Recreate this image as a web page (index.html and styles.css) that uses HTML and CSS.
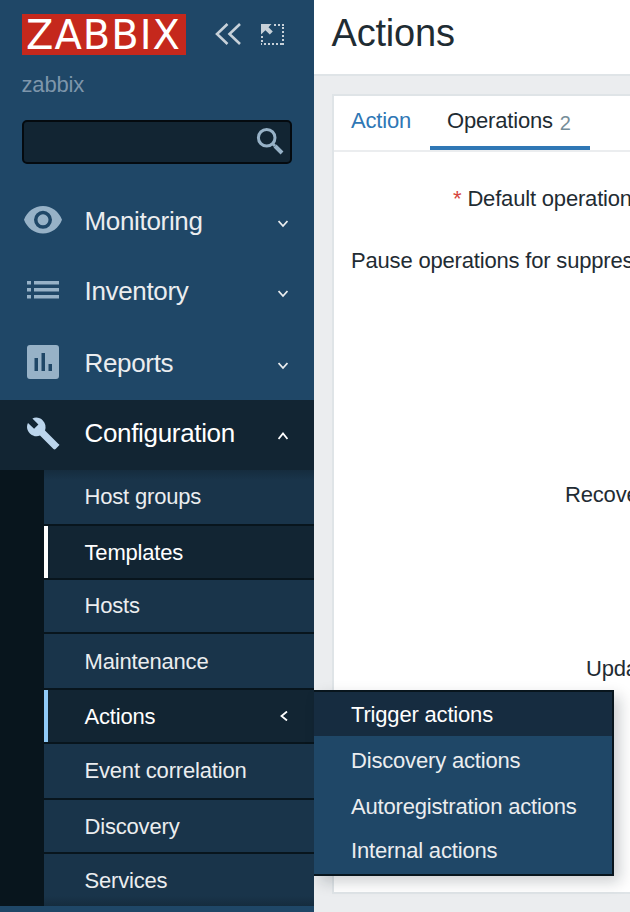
FILE: index.html
```html
<!DOCTYPE html>
<html lang="en">
<head>
<meta charset="utf-8">
<title>Actions</title>
<link rel="stylesheet" href="styles.css">
</head>
<body>
<div class="layout">
  <aside class="sidebar">
    <div class="brand">
      <div class="logo">ZABBIX</div>
      <svg class="collapse" width="28" height="24" viewBox="0 0 28 24"><path d="M13.500 2 3 12l10.500 10M26 2 15.500 12 26 22"/></svg>
      <svg class="kiosk" width="24" height="24" viewBox="0 0 24 24"><path class="arrow" d="M0 1h10.500L7.500 4.200l4.300 4.300-3 3L4.400 7.200 0 11.500z"/><path class="dots" d="M13 2h10M22 4v18M21 21H0M1 19v-6"/></svg>
    </div>
    <div class="server">zabbix</div>
    <div class="search"><svg width="28" height="28" viewBox="0 0 28 28"><circle cx="10.700" cy="10.700" r="8.300"/><path d="m17 17 2 2"/><path class="handle" d="m19 19 7 7"/></svg></div>
    <nav>
      <div class="item"><svg class="icon" width="40" height="40" viewBox="0 0 40 40"><path d="M20 6C11.500 6 4 11.500 1 19.800 4 28 11.500 33.500 20 33.500s16-5.500 19-13.700C36 11.500 28.500 6 20 6zm0 22.800a9 9 0 1 1 0-18 9 9 0 0 1 0 18zm0-14.500a5.500 5.500 0 1 0 0 11 5.500 5.500 0 0 0 0-11z"/></svg><span class="label">Monitoring</span><svg class="chev" width="10" height="8" viewBox="0 0 10 8"><path d="m.500 1 4.500 5 4.500-5"/></svg></div>
      <div class="item second"><svg class="icon" width="40" height="40" viewBox="0 0 40 40"><path d="M4 11h4v3.500H4zM11 11h25v3.500H11zM4 18h4v3.500H4zM11 18h25v3.500H11zM4 25h4v3.500H4zM11 25h25v3.500H11z"/></svg><span class="label">Inventory</span><svg class="chev" width="10" height="8" viewBox="0 0 10 8"><path d="m.500 1 4.500 5 4.500-5"/></svg></div>
      <div class="item third"><svg class="icon" width="40" height="40" viewBox="0 0 40 40"><path fill-rule="evenodd" d="M7 3h26q3 0 3 3v28q0 3-3 3H7q-3 0-3-3V6q0-3 3-3zM11.500 16v13h3.500V16zM18.500 11v18h3.500V11zM25.500 22v7h3.500v-7z"/></svg><span class="label">Reports</span><svg class="chev" width="10" height="8" viewBox="0 0 10 8"><path d="m.500 1 4.500 5 4.500-5"/></svg></div>
      <div class="item open"><svg class="icon" width="40" height="40" viewBox="0 0 40 40"><path d="M35.500 31 22 17.500c1.300-3.500.5-7.400-2.200-10.100C16.900 4.500 12.800 3.800 9.400 5.500l6 6-4.300 4.300L5 9.900C3.200 13.200 4 17.500 6.900 20.400c2.700 2.700 6.600 3.500 10.100 2.200L30.500 36c.6.600 1.500.6 2.100 0l3.400-3.400c.5-.5.500-1.200-.5-1.600z"/></svg><span class="label">Configuration</span><svg class="chev" width="10" height="8" viewBox="0 0 10 8"><path d="m.500 7 4.500-5.500 4.500 5.500"/></svg></div>
      <div class="submenu">
        <div class="sub tall">Host groups</div>
        <div class="sub low hover">Templates</div>
        <div class="sub">Hosts</div>
        <div class="sub tall low">Maintenance</div>
        <div class="sub low current">Actions<svg class="chev" width="8" height="10" viewBox="0 0 8 10"><path d="M7 .500 1.500 5 7 9.500"/></svg>
          <div class="popup">
            <div class="choice selected">Trigger actions</div>
            <div class="choice lower">Discovery actions</div>
            <div class="choice lower">Autoregistration actions</div>
            <div class="choice">Internal actions</div>
          </div>
        </div>
        <div class="sub tall">Event correlation</div>
        <div class="sub low">Discovery</div>
        <div class="sub last low">Services</div>
      </div>
    </nav>
  </aside>
  <main>
    <header><h1>Actions</h1></header>
    <section class="card">
      <div class="tabs"><div class="tab">Action</div><div class="tab active">Operations <span class="count">2</span></div></div>
      <div class="form">
        <div class="row default"><span class="star">*</span>Default operation</div>
        <div class="row pause">Pause operations for suppres</div>
        <div class="row recovery">Recove</div>
        <div class="row update">Upda</div>
      </div>
    </section>
  </main>
</div>
</body>
</html>
```
FILE: styles.css
```css
* { box-sizing: border-box; }
body { margin: 0; width: 630px; height: 912px; overflow: hidden; background: #ebedef; font: 22px/26px "Liberation Sans", Arial, sans-serif; letter-spacing: -.18px; color: #1f2c33; }
.layout { display: flex; height: 912px; }
.sidebar { width: 314px; flex: none; background: #1f4767; position: relative; z-index: 1; color: #ebedef; }
.brand { display: flex; align-items: flex-start; padding: 14px 0 0 22px; height: 72px; }
.logo { width: 164px; height: 41px; flex: none; background: #c5281c; color: #fff; font: 40px/42px "DejaVu Sans", sans-serif; letter-spacing: 1px; padding-left: 4px; white-space: nowrap; }
.brand svg { fill: none; stroke: #c7d1d9; }
.collapse { margin: 8px 0 0 28px; stroke-width: 2.600; }
.kiosk { margin: 9px 0 0 19px; }
.brand .arrow { fill: #c7d1d9; stroke: none; }
.kiosk .dots { stroke-width: 2; stroke-dasharray: 2 2; }
.server { height: 48px; padding-left: 21.500px; color: #7e96ab; }
.search { margin-left: 22px; width: 270px; height: 44px; border: 2px solid #040a0f; border-radius: 5px; background: #122533; display: flex; justify-content: flex-end; padding: 5px 6px 0 0; }
.search svg { fill: none; stroke: #97b2c7; stroke-width: 3; }
.search .handle { stroke-width: 4; }
nav { padding-top: 22px; }
.item { height: 71px; display: flex; align-items: center; padding: 0 26px 2px 23px; font-size: 26px; line-height: 30px; letter-spacing: -.33px; }
.item.second, .item.open { padding-bottom: 4px; }
.item.third { height: 72px; padding-bottom: 3px; }
.icon { fill: #97b2c7; margin: 0 21.500px 2px 0; flex: none; }
.label { flex: 1; }
.chev { fill: none; stroke: currentColor; stroke-width: 1.800; flex: none; }
.item .chev { margin-top: 6px; }
.item.open { height: 70px; background: #122533; color: #fff; }
.open .icon { fill: #bbd5ec; margin-bottom: 0; }
.submenu { background: #08151d; padding-left: 44px; height: 436px; }
.sub { height: 54px; border-bottom: 2px solid #08151d; background: #19344a; padding-left: 40.500px; display: flex; align-items: center; position: relative; }
.sub.tall { height: 56px; }
.sub.low { padding-top: 2px; }
.sub.last { height: 52px; border: 0; }
.sub.hover, .sub.current { background: #122533; color: #fff; }
.sub.hover { box-shadow: inset 4px 0 #fff; }
.sub.current { box-shadow: inset 4px 0 #8fcaf7; }
.sub .chev { margin: 0 26.500px 3px auto; }
.sub:first-child { background: linear-gradient(#152c3e, #19344a 10px); }
.sub.last { background: linear-gradient(#19344a 42px, #152c3e); }
.popup { position: absolute; left: 270px; top: 0; width: 300px; height: 186px; background: #1f4767; border: 2px solid #08151d; border-left: 0; box-shadow: 6px 6px 14px rgba(8,21,29,.2); color: #ebedef; }
.choice { height: 46px; padding: 10px 0 0 37px; }
.choice.lower { padding-top: 12px; }
.choice.selected { height: 44px; background: #162c40; color: #fff; }
main { flex: 1; min-width: 0; }
header { height: 76px; background: #fff; border-bottom: 2px solid #dfe4e7; padding: 11px 0 0 17.500px; }
h1 { margin: 0; font-size: 38px; line-height: 44px; font-weight: 400; letter-spacing: -.2px; }
.card { height: 800px; margin: 18px 0 0 18px; background: #fff; border: 2px solid #dfe4e7; border-right: 0; overflow: hidden; }
.tabs { height: 56px; display: flex; border-bottom: 2px solid #ebedef; }
.tab { height: 54px; width: 96px; padding: 12px 0 0 17px; color: #2f77b5; }
.tab.active { width: 160px; border-bottom: 4px solid #2f77b5; color: #1f2c33; white-space: nowrap; }
.count { color: #768d99; font-size: 20px; position: relative; left: 1px; top: 2px; }
.form { display: flex; flex-direction: column; white-space: nowrap; }
.row { padding-left: 17px; }
.default { padding-left: 119px; margin-top: 34px; }
.star { color: #d64540; margin-right: 6px; }
.pause { margin-top: 36px; }
.recovery { margin-top: 208px; padding-left: 231px; }
.update { margin-top: 148px; padding-left: 252px; }
```
